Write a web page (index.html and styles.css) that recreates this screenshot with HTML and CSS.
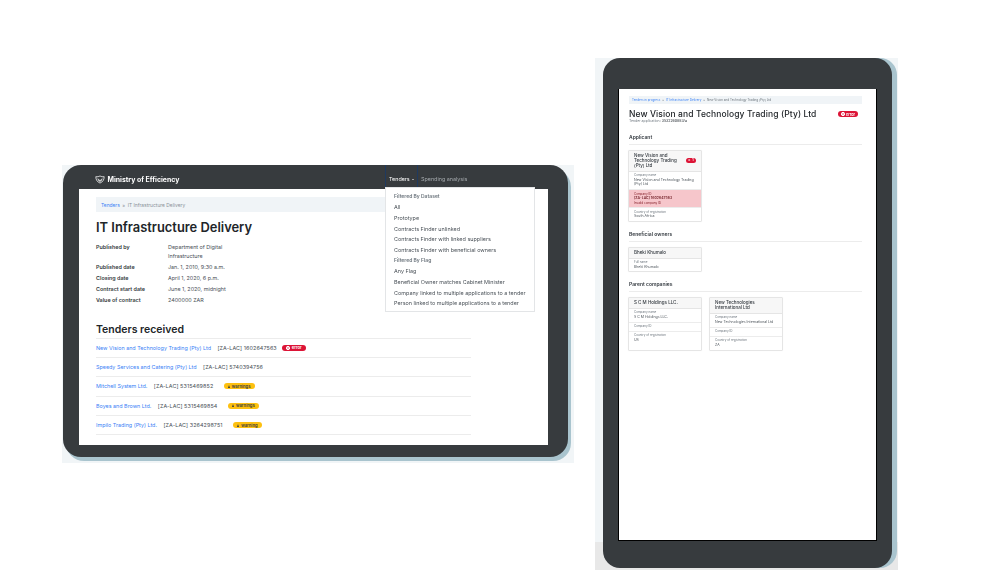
FILE: index.html
```html
<!DOCTYPE html>
<html lang="en">
<head>
<meta charset="utf-8">
<title>Ministry of Efficiency</title>
<link rel="stylesheet" href="styles.css">
</head>
<body>
<svg class="defs" aria-hidden="true"><symbol id="x-octagon" viewBox="0 0 10 10"><path d="M3 0h4l3 3v4l-3 3H3L0 7V3Z" fill="#fff"/><path d="M3.200 3.200 6.800 6.800M6.800 3.200 3.200 6.800" stroke="#dc1436" stroke-width="1.200"/></symbol></svg>
<section class="stage stage-land">
  <div class="frame frame-land">
    <header class="nav">
      <svg class="logo" viewBox="0 0 12 10" aria-hidden="true"><path d="M1 1.600C3 2 4.500 1.600 6 .7c1.500.9 3 1.300 5 .9 0 3.700-1.500 6.200-5 7.700C2.500 7.800 1 5.300 1 1.600Z" fill="none" stroke="#fff" stroke-width=".9"/><path d="M3 3.200 6 5.800 9 3.200 8.600 6 6 8 3.400 6Z" fill="#fff" fill-opacity=".75"/></svg>
      <span class="brand">Ministry of Efficiency</span>
      <div class="menu">
        <span class="menu-active">Tenders <i class="caret"></i></span>
        <span class="menu-other">Spending analysis</span>
        <div class="dropdown">
          <div class="drop-head">Filtered By Dataset</div>
          <div class="drop-item">All</div>
          <div class="drop-item">Prototype</div>
          <div class="drop-item">Contracts Finder unlinked</div>
          <div class="drop-item">Contracts Finder with linked suppliers</div>
          <div class="drop-item">Contracts Finder with beneficial owners</div>
          <div class="drop-head">Filtered By Flag</div>
          <div class="drop-item">Any Flag</div>
          <div class="drop-item">Beneficial Owner matches Cabinet Minister</div>
          <div class="drop-item">Company linked to multiple applications to a tender</div>
          <div class="drop-item">Person linked to multiple applications to a tender</div>
        </div>
      </div>
    </header>
    <main class="screen-land">
      <div class="crumbs"><a>Tenders</a><span class="sep">»</span><span>IT Infrastructure Delivery</span></div>
      <h1 class="title">IT Infrastructure Delivery</h1>
      <dl class="facts">
        <dt>Published by</dt><dd>Department of Digital<br>Infrastructure</dd>
        <dt>Published date</dt><dd>Jan. 1, 2010, 9:30 a.m.</dd>
        <dt>Closing date</dt><dd>April 1, 2020, 6 p.m.</dd>
        <dt>Contract start date</dt><dd>June 1, 2020, midnight</dd>
        <dt>Value of contract</dt><dd>2400000 ZAR</dd>
      </dl>
      <h2 class="subtitle">Tenders received</h2>
      <ul class="tenders">
        <li><a>New Vision and Technology Trading (Pty) Ltd</a><span>[ZA-LAC] 1602647563</span><b class="badge err"><svg class="ico"><use href="#x-octagon"/></svg>error</b></li>
        <li><a>Speedy Services and Catering (Pty) Ltd</a><span>[ZA-LAC] 5740394756</span></li>
        <li><a>Mitchell System Ltd.</a><span>[ZA-LAC] 5315469852</span><b class="badge warn"><i class="tri"></i>warnings</b></li>
        <li><a>Boyes and Brown Ltd.</a><span>[ZA-LAC] 5315469854</span><b class="badge warn"><i class="tri"></i>warnings</b></li>
        <li><a>Impilo Trading (Pty) Ltd.</a><span>[ZA-LAC] 3264298751</span><b class="badge warn"><i class="tri"></i>warning</b></li>
      </ul>
    </main>
  </div>
</section>

<section class="stage stage-port">
  <div class="floor"></div>
  <div class="frame frame-port">
    <main class="screen-port">
      <div class="p-crumbs"><a>Tenders in progress</a><span>»</span><a>IT Infrastructure Delivery</a><span>»</span><span>New Vision and Technology Trading (Pty) Ltd</span></div>
      <div class="p-head">
        <div>
          <h1 class="p-title">New Vision and Technology Trading (Pty) Ltd</h1>
          <p class="p-sub">Tender application: <b>3532260883/a</b></p>
        </div>
        <b class="p-badge"><svg class="ico"><use href="#x-octagon"/></svg>error</b>
      </div>
      <h2 class="p-section first">Applicant</h2>
      <div class="cards">
        <article class="card">
          <div class="card-head"><span>New Vision and Technology Trading (Pty) Ltd</span><b class="count">✕ 1</b></div>
          <div class="row"><small>Company name</small>New Vision and Technology Trading (Pty) Ltd</div>
          <div class="row alert"><small>Company ID</small><b>[ZA-LAC] 1602647563</b><small>Invalid company ID</small></div>
          <div class="row"><small>Country of registration</small>South Africa</div>
        </article>
      </div>
      <h2 class="p-section">Beneficial owners</h2>
      <div class="cards">
        <article class="card">
          <div class="card-head"><span>Bheki Khumalo</span></div>
          <div class="row"><small>Full name</small>Bheki Khumalo</div>
        </article>
      </div>
      <h2 class="p-section">Parent companies</h2>
      <div class="cards">
        <article class="card">
          <div class="card-head"><span>S C M Holdings LLC.</span></div>
          <div class="row"><small>Company name</small>S C M Holdings LLC.</div>
          <div class="row"><small>Company ID</small></div>
          <div class="row"><small>Country of registration</small>US</div>
        </article>
        <article class="card">
          <div class="card-head"><span>New Technologies International Ltd</span></div>
          <div class="row"><small>Company name</small>New Technologies International Ltd</div>
          <div class="row"><small>Company ID</small></div>
          <div class="row"><small>Country of registration</small>ZA</div>
        </article>
      </div>
    </main>
  </div>
</section>
</body>
</html>
```
FILE: styles.css
```css
* { box-sizing: border-box; }
html, body { margin: 0; height: 100%; background: #fff; overflow: hidden; }
body { position: relative; font-family: Inter, "Liberation Sans", sans-serif; color: #343a40; }
h1, h2, p, dl, dd, ul { margin: 0; padding: 0; }
a { color: #3b82f6; text-decoration: none; }
i { font-style: normal; }
.defs { display: none; }
.ico { width: 4px; height: 4px; flex: none; }

.stage { position: absolute; background: #f1f5f7; }
.stage-land { left: 62px; top: 165px; width: 512px; height: 298px; }
.stage-port { left: 595px; top: 58px; width: 303px; height: 512px; }
.floor { position: absolute; left: 0; right: 0; top: 484px; bottom: 0; background: #e8e8e8; }
.frame { position: absolute; background: #373b3e; }
.frame-land { left: 1px; top: 0; width: 505px; height: 292px; border-radius: 18px; box-shadow: 3px 4px 0 #a9c4ce; display: flex; flex-direction: column; padding: 0 20px 12px 16px; filter: blur(.25px); }
.frame-port { left: 8px; top: 0; width: 289px; height: 510px; border-radius: 17px; box-shadow: 5px 0 0 #a9c4ce; padding: 31px 15px 27px 15px; }

.nav { height: 24px; flex: none; display: flex; align-items: center; padding: 4px 0 0 16px; position: relative; }
.logo { width: 10px; height: 9px; margin-right: 2.500px; }
.brand { color: #fff; font-size: 6.900px; font-weight: 700; }
.menu { position: absolute; left: 306px; top: 0; height: 22px; display: flex; align-items: center; font-size: 5.400px; }
.menu-active { width: 33px; height: 22px; display: flex; align-items: center; gap: 2px; padding: 6px 0 0 3px; color: #fff; border: 1px solid #1f3a5f; border-width: 0 1px; white-space: nowrap; }
.menu-other { margin-left: 3px; padding-top: 6px; color: #a4a9ad; }
.caret { width: 0; height: 0; border: 1.500px solid transparent; border-top-color: #fff; border-bottom: 0; }
.dropdown { position: absolute; left: 0; top: 22px; width: 150px; height: 125px; background: #fff; border: 1px solid #e3e5e7; padding: 3px 8px; color: #495057; z-index: 2; }
.drop-item, .drop-head { height: 10.700px; line-height: 10.700px; white-space: nowrap; }
.drop-item { font-size: 5.450px; padding-top: .5px; }
.drop-head { font-size: 5px; font-weight: 600; color: #6c757d; }

.screen-land { flex: 1; background: #fff; padding: 8px 17px 0 17px; min-height: 0; }
.crumbs { height: 15px; background: #f0f4f7; padding-left: 5px; display: flex; align-items: center; gap: 2.500px; font-size: 4.900px; color: #8a9197; }
.title { font-size: 12.900px; line-height: 18px; font-weight: 600; color: #212529; margin-top: 7px; }
.facts { display: grid; grid-template-columns: 72px 1fr; margin-top: 6px; font-size: 5.400px; line-height: 8.500px; row-gap: 2.500px; }
.facts dt { font-weight: 600; color: #343a40; }
.facts dd { color: #495057; }
.subtitle { font-size: 10.500px; line-height: 14px; font-weight: 600; color: #212529; margin-top: 18.500px; padding-bottom: 1px; }
.tenders { list-style: none; width: 375px; border-top: 1px solid #ececec; }
.tenders li { height: 19.400px; border-bottom: 1px solid #ececec; display: flex; align-items: center; font-size: 5.400px; color: #495057; white-space: nowrap; }
.tenders a { margin-right: 6.500px; }
.tenders span { letter-spacing: .1px; }
.badge { display: inline-flex; align-items: center; gap: 2px; height: 6px; border-radius: 3px; padding: 0 4px; margin-left: 5px; font-size: 4.200px; font-weight: 600; }
.err { background: #dc1436; color: #fff; }
.warn { background: #fdc010; color: #343a40; margin-left: 10.500px; }
.tri { width: 0; height: 0; border-left: 1.800px solid transparent; border-right: 1.800px solid transparent; border-bottom: 3.200px solid #343a40; display: inline-block; }

.screen-port { height: 452px; background: #fff; border-bottom: 1.500px solid #000; border-left: 1px solid #000; border-right: 1px solid #000; padding: 7px 14px 0 10px; filter: blur(.35px); }
.p-crumbs { height: 8px; background: #f0f4f7; display: flex; align-items: center; gap: 2px; padding-left: 3px; font-size: 3px; color: #6c757d; white-space: nowrap; }
.p-head { display: flex; justify-content: space-between; align-items: flex-start; margin-top: 5px; padding-right: 4px; }
.p-title { font-size: 8.500px; line-height: 10px; font-weight: 500; color: #212529; letter-spacing: .1px; white-space: nowrap; }
.p-sub { font-size: 3.500px; line-height: 5px; color: #6c757d; }
.p-sub b { font-weight: 500; color: #343a40; }
.p-badge { display: inline-flex; align-items: center; gap: 1.500px; width: 20px; height: 6px; margin-top: 2px; padding: 0 2.500px; background: #dc1436; color: #fff; border-radius: 3px; font-size: 3.800px; font-weight: 600; }
.p-section { font-size: 5px; line-height: 7px; font-weight: 600; color: #343a40; margin-top: 9px; padding-bottom: 2.500px; border-bottom: 1px solid #ececec; }
.p-section.first { margin-top: 10px; }
.cards { display: flex; gap: 7px; margin: 5px 0 0 -1px; }
.card { width: 74px; display: flex; flex-direction: column; border: 1px solid #e5e5e5; border-radius: 1px; font-size: 3.500px; line-height: 4.800px; color: #495057; box-shadow: 0 0 1px #eee; }
.card-head { display: flex; align-items: center; justify-content: space-between; gap: 2px; padding: 2.500px 5px; background: #f7f7f7; border-bottom: 1px solid #e5e5e5; font-size: 4.500px; line-height: 5px; font-weight: 500; color: #343a40; }
.count { flex: none; width: 10px; height: 5px; border-radius: 2.500px; background: #dc1436; color: #fff; font-size: 3px; line-height: 5px; text-align: center; }
.row { padding: 1.500px 5px 2px; border-bottom: 1px solid #ececec; }
.row:last-child { border-bottom: 0; flex: 1; }
.row small { display: block; font-size: 3px; line-height: 4.500px; color: #6c757d; }
.alert { background: #f6c6cb; color: #6f1c24; }
.alert small { color: #842029; }
.alert b { display: block; font-weight: 600; }
```
